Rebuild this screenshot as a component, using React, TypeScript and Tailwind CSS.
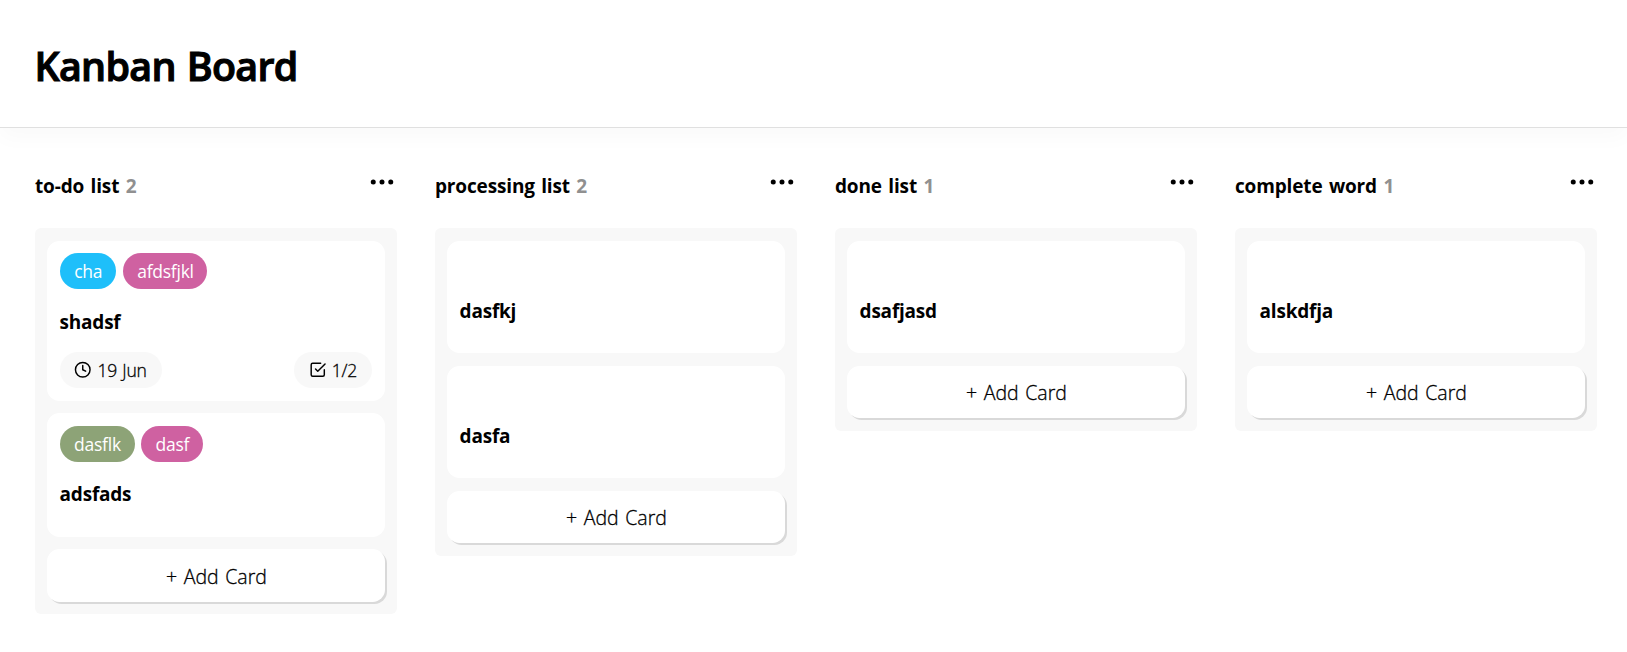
import { FiCheckSquare, FiClock, FiMoreHorizontal } from "react-icons/fi";

type Label = { text: string; style: string };
type Card = { title: string; height: string; labels: Label[]; date?: string; tasks?: string };
type Board = { title: string; count: number; cards: Card[] };

const boards: Board[] = [
  {
    title: "to-do list",
    count: 2,
    cards: [
      {
        title: "shadsf",
        height: "h-40",
        labels: [
          { text: "cha", style: "w-[56.4px] mr-[0.6px] bg-[#1ebffa]" },
          { text: "afdsfjkl", style: "w-[84px] bg-[#cf61a1]" },
        ],
        date: "19 Jun",
        tasks: "1/2",
      },
      {
        title: "adsfads",
        height: "h-[123.7px]",
        labels: [
          { text: "dasflk", style: "w-[75px] bg-[#8da377]" },
          { text: "dasf", style: "w-[61.8px] bg-[#cf61a1]" },
        ],
      },
    ],
  },
  {
    title: "processing list",
    count: 2,
    cards: [
      { title: "dasfkj", height: "h-[112.5px]", labels: [] },
      { title: "dasfa", height: "h-[112.5px]", labels: [] },
    ],
  },
  {
    title: "done list",
    count: 1,
    cards: [{ title: "dsafjasd", height: "h-[112.5px]", labels: [] }],
  },
  {
    title: "complete word",
    count: 1,
    cards: [{ title: "alskdfja", height: "h-[112.5px]", labels: [] }],
  },
];

function CardView({ card }: { card: Card }) {
  const hasLabels = card.labels.length > 0;
  return (
    <article className={`rounded-[12.5px] bg-white px-[12.6px] pt-[12.5px] ${card.height}`}>
      {hasLabels && (
        <div className="flex h-9 gap-[6.5px]">
          {card.labels.map((l) => (
            <span
              key={l.text}
              className={`flex h-9 items-center justify-center rounded-full pl-[0.8px] text-[17.5px] tracking-[-0.25px] text-white ${l.style}`}
            >
              {l.text}
            </span>
          ))}
        </div>
      )}
      <h3
        className={`text-[19px] leading-[26px] font-bold tracking-[-0.22px] ${hasLabels ? "mt-[19.6px]" : "mt-[45px]"}`}
      >
        {card.title}
      </h3>
      {card.date && (
        <div className="mt-[17px] flex justify-between">
          <span className="flex h-9 w-[102px] items-center gap-[5.5px] rounded-full bg-[#f8f8f8] pl-[14.8px] text-[17.5px] font-light tracking-[-0.2px] [-webkit-text-stroke:0.3px_#000] [word-spacing:1px]">
            <FiClock size={17.5} />
            {card.date}
          </span>
          <span className="flex h-9 w-[78px] items-center gap-[5.5px] rounded-full bg-[#f8f8f8] pl-[14.3px] text-[17.5px] font-light tracking-[-0.2px] [-webkit-text-stroke:0.3px_#000]">
            <FiCheckSquare size={17.5} />
            {card.tasks}
          </span>
        </div>
      )}
    </article>
  );
}

function BoardView({ board }: { board: Board }) {
  return (
    <section className="w-[362px] shrink-0">
      <div className="flex h-[61px] items-start justify-between">
        <h2 className="pt-[6.3px] text-[19px] leading-[27px] font-bold tracking-[-0.15px] [word-spacing:1.6px]">
          {board.title} <span className="text-[#909090]">{board.count}</span>
        </h2>
        <FiMoreHorizontal size={30} />
      </div>
      <div className="flex flex-col gap-[12.5px] rounded-md bg-[#f8f8f8] px-3 py-[12.5px]">
        {board.cards.map((c) => (
          <CardView key={c.title} card={c} />
        ))}
        <button className="h-[52.5px] rounded-[12.5px] bg-white pt-[2px] pl-px text-[19.5px] font-light shadow-[2px_2px_0_#d9d9d9] [-webkit-text-stroke:0.3px_#000] [word-spacing:1.5px]">
          + Add Card
        </button>
      </div>
    </section>
  );
}

export default function App() {
  return (
    <div className="h-[652px] overflow-hidden bg-white font-['Open_Sans',sans-serif] text-black">
      <header className="flex h-32 items-center border-b border-[#e0e0e0] bg-white pt-[4px] pl-[34.5px] shadow-[0_10px_20px_rgba(0,0,0,0.025)]">
        <h1 className="text-[39.4px] leading-[54px] font-semibold tracking-[-0.7px] [-webkit-text-stroke:1.1px_#000] [word-spacing:1.5px]">
          Kanban Board
        </h1>
      </header>
      <main className="flex gap-[38px] pt-[39.2px] pl-[35px]">
        {boards.map((b) => (
          <BoardView key={b.title} board={b} />
        ))}
      </main>
    </div>
  );
}
